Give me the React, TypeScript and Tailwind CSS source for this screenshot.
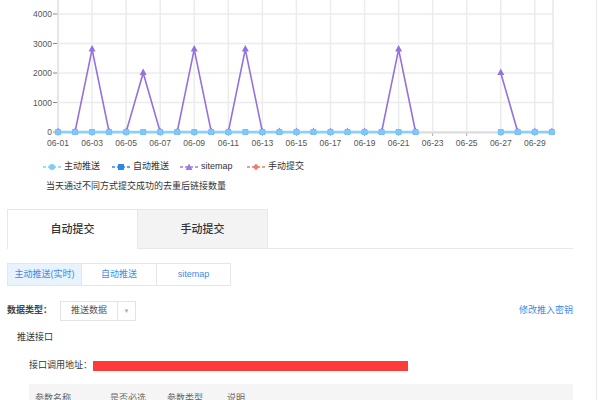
const N = 30;
const xAt = (i: number) => 58 + i * 17.03;
const yAt = (v: number) => 132 - v * 0.0295;

const sitemap: (number | null)[] = [
  0, 0, 2800, 0, 0, 2000, 0, 0, 2800, 0, 0, 2800, 0, 0, 0, 0, 0, 0, 0, 0, 2800, 0,
  null, null, null, null, 2000, 0, 0, 0,
];
const pushes: (number | null)[] = sitemap.map((v) => (v === null ? null : 0));

function segments(data: (number | null)[]) {
  const out: string[] = [];
  let cur: string[] = [];
  data.forEach((v, i) => {
    if (v === null) {
      if (cur.length) out.push(cur.join(" "));
      cur = [];
    } else {
      cur.push(`${cur.length ? "L" : "M"}${xAt(i).toFixed(1)},${yAt(v).toFixed(1)}`);
    }
  });
  if (cur.length) out.push(cur.join(" "));
  return out;
}

function Chart() {
  const yTicks = [0, 1000, 2000, 3000, 4000];
  const labels = Array.from({ length: N / 2 }, (_, k) => k * 2);
  return (
    <svg width="597" height="152" className="block">
      {yTicks.map((v) => (
        <g key={v}>
          <line x1={58} x2={553} y1={yAt(v)} y2={yAt(v)} stroke="#ececec" strokeWidth="1.5" />
          <line x1={53} x2={58} y1={yAt(v)} y2={yAt(v)} stroke="#888" strokeWidth="1" />
          <text x={52} y={yAt(v) + 3} textAnchor="end" fontSize="8.5" fill="#555">
            {v}
          </text>
        </g>
      ))}
      {labels.map((i) => (
        <g key={i}>
          <line x1={xAt(i)} x2={xAt(i)} y1={0} y2={132} stroke="#ececec" strokeWidth="1.5" />
          <line x1={xAt(i)} x2={xAt(i)} y1={132} y2={136} stroke="#aaa" strokeWidth="1" />
          <text x={xAt(i)} y={146} textAnchor="middle" fontSize="8.5" fill="#555">
            06-{String(i + 1).padStart(2, "0")}
          </text>
        </g>
      ))}
      <line x1={58} x2={58} y1={0} y2={132} stroke="#dcdcdc" strokeWidth="1" />
      <line x1={553} x2={553} y1={0} y2={132} stroke="#dcdcdc" strokeWidth="1" />
      <line x1={58} x2={553} y1={132.5} y2={132.5} stroke="#dcdcdc" strokeWidth="2" />

      {segments(sitemap).map((d, k) => (
        <path key={k} d={d} fill="none" stroke="#9372dc" strokeWidth="1.6" />
      ))}
      {sitemap.map((v, i) =>
        v === null ? null : (
          <polygon
            key={i}
            points={`${xAt(i)},${yAt(v) - 4.5} ${xAt(i) - 3.5},${yAt(v) + 2} ${xAt(i) + 3.5},${yAt(v) + 2}`}
            fill="#9372dc"
          />
        )
      )}
      {segments(pushes).map((d, k) => (
        <path key={k} d={d} fill="none" stroke="#8ad0f8" strokeWidth="2.5" />
      ))}
      {pushes.map((v, i) =>
        v === null ? null : (
          <g key={i}>
            <rect x={xAt(i) - 3} y={yAt(v) - 3} width="6" height="6" rx="1" fill="#6dbcf6" />
            <circle cx={xAt(i)} cy={yAt(v)} r="2.6" fill="#7fc8f7" />
          </g>
        )
      )}
    </svg>
  );
}

function LegendMark({ color, shape }: { color: string; shape: "circle" | "square" | "tri" | "diamond" }) {
  return (
    <svg width="18" height="8" className="mr-[3px] shrink-0">
      <line x1="0" x2="18" y1="4" y2="4" stroke={color} strokeWidth="1.5" strokeDasharray="3 2" />
      {shape === "circle" && <circle cx="9" cy="4" r="3" fill={color} />}
      {shape === "square" && <rect x="6" y="1" width="6" height="6" fill={color} />}
      {shape === "tri" && <polygon points="9,0.5 5.5,7 12.5,7" fill={color} />}
      {shape === "diamond" && <polygon points="9,0.8 12.2,4 9,7.2 5.8,4" fill={color} />}
    </svg>
  );
}

export default function App() {
  const legend = [
    { label: "主动推送", color: "#7fcff5", shape: "circle" as const, w: "w-[69px]" },
    { label: "自动推送", color: "#2e87e8", shape: "square" as const, w: "w-[68px]" },
    { label: "sitemap", color: "#9a7de0", shape: "tri" as const, w: "w-[67px]" },
    { label: "手动提交", color: "#f7796a", shape: "diamond" as const, w: "w-[70px]" },
  ];
  return (
    <div className="h-[400px] w-[600px] overflow-hidden bg-white font-['Liberation_Sans','Noto_Sans_CJK_SC',sans-serif] text-[#333]">
      <div className="h-[400px] w-[597px] border-r border-[#ebebeb]">
        <Chart />

        <div className="mt-[8px] flex h-[14px] items-center pl-[43px] text-[9px]">
          {legend.map((l) => (
            <div key={l.label} className={`flex items-center ${l.w}`}>
              <LegendMark color={l.color} shape={l.shape} />
              <span>{l.label}</span>
            </div>
          ))}
        </div>

        <div className="mt-[6px] flex h-[14px] items-center pl-[46px] text-[9px]">
          当天通过不同方式提交成功的去重后链接数量
        </div>

        <div className="mt-[15px] pl-[7px] pr-[23px]">
          <div className="flex h-[40px]">
            <div className="flex w-[130px] items-center justify-center border-l border-t border-[#e8e8e8] bg-white text-[11px] font-medium text-[#333]">
              自动提交
            </div>
            <div className="flex w-[131px] items-center justify-center border border-[#e8e8e8] bg-[#f3f3f3] text-[11px] font-medium text-[#333]">
              手动提交
            </div>
            <div className="flex-1 border-b border-[#e8e8e8]" />
          </div>

          <div className="mt-[14px] flex h-[23px] text-[9px] text-[#3b8ce8]">
            <div className="flex w-[75px] items-center justify-center border border-[#e6e6e6] bg-[#e8f3fd]">
              主动推送(实时)
            </div>
            <div className="flex w-[75px] items-center justify-center border-y border-r border-[#e6e6e6]">
              自动推送
            </div>
            <div className="flex w-[74px] items-center justify-center border-y border-r border-[#e6e6e6]">
              sitemap
            </div>
          </div>

          <div className="mt-[15px] flex h-[20px] items-center text-[9px]">
            <span className="w-[53px] whitespace-nowrap font-bold text-[#444]">数据类型：</span>
            <div className="flex h-[20px] w-[76px] items-center border border-[#e3e3e3]">
              <span className="flex h-full w-[57px] items-center justify-center border-r border-[#e3e3e3] text-[#555]">
                推送数据
              </span>
              <span className="flex flex-1 items-center justify-center text-[6px] text-[#aaa]">▼</span>
            </div>
            <span className="ml-auto text-[#3b8ce8]">修改推入密钥</span>
          </div>

          <div className="mt-[10px] flex h-[14px] items-center pl-[10px] text-[9px]">推送接口</div>

          <div className="mt-[15px] flex h-[12px] items-center pl-[22px] text-[9px]">
            <span className="mr-[1px] whitespace-nowrap">接口调用地址：</span>
            <div className="h-[10px] w-[315px] bg-[#fd3b3b]" />
          </div>

          <div className="ml-[22px] mt-[12px] flex h-[30px] items-start bg-[#f5f5f5] pt-[8px] text-[9px] text-[#666]">
            <span className="ml-[6px] w-[75px]">参数名称</span>
            <span className="w-[57px]">是否必选</span>
            <span className="w-[60px]">参数类型</span>
            <span>说明</span>
          </div>
        </div>
      </div>
    </div>
  );
}
